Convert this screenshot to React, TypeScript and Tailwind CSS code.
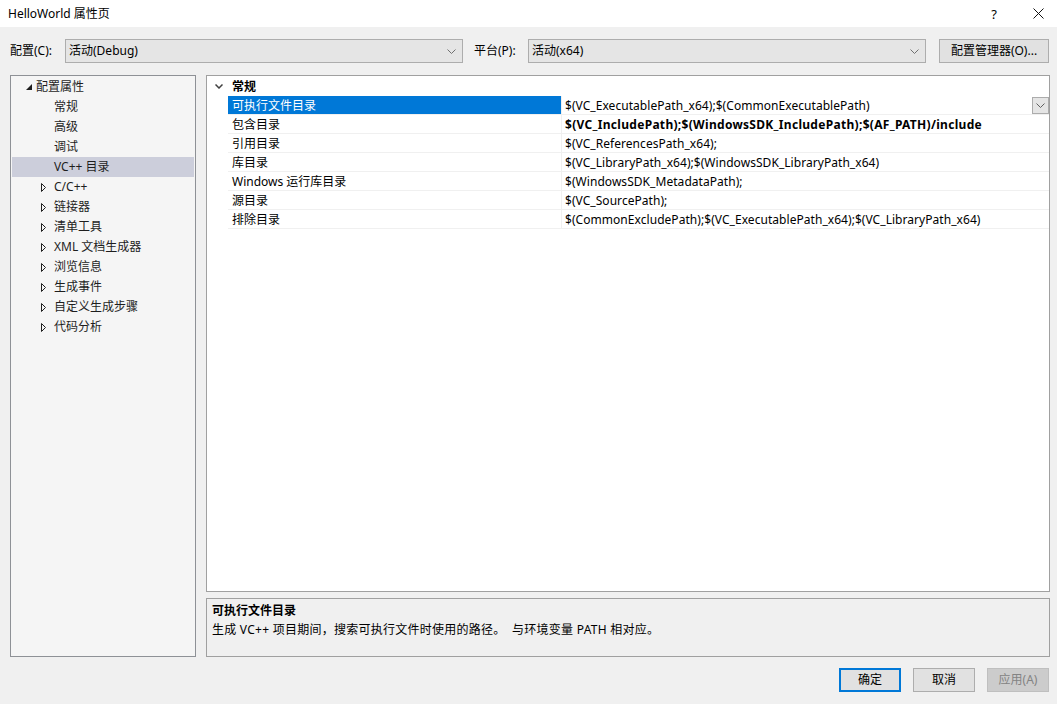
import React from "react"

const font = { fontFamily: '"Noto Sans", "Noto Sans CJK SC", sans-serif' }

const tree = [
  { label: "常规", kind: "leaf" },
  { label: "高级", kind: "leaf" },
  { label: "调试", kind: "leaf" },
  { label: "VC++ 目录", kind: "leaf", selected: true },
  { label: "C/C++", kind: "node" },
  { label: "链接器", kind: "node" },
  { label: "清单工具", kind: "node" },
  { label: "XML 文档生成器", kind: "node" },
  { label: "浏览信息", kind: "node" },
  { label: "生成事件", kind: "node" },
  { label: "自定义生成步骤", kind: "node" },
  { label: "代码分析", kind: "node" },
]

const props = [
  { name: "可执行文件目录", value: "$(VC_ExecutablePath_x64);$(CommonExecutablePath)", selected: true },
  { name: "包含目录", value: "$(VC_IncludePath);$(WindowsSDK_IncludePath);$(AF_PATH)/include", bold: true },
  { name: "引用目录", value: "$(VC_ReferencesPath_x64);" },
  { name: "库目录", value: "$(VC_LibraryPath_x64);$(WindowsSDK_LibraryPath_x64)" },
  { name: "Windows 运行库目录", value: "$(WindowsSDK_MetadataPath);" },
  { name: "源目录", value: "$(VC_SourcePath);" },
  { name: "排除目录", value: "$(CommonExcludePath);$(VC_ExecutablePath_x64);$(VC_LibraryPath_x64)" },
]

function Chevron({ color = "#606060" }: { color?: string }) {
  return (
    <svg width="9" height="5" viewBox="0 0 9 5">
      <polyline points="0.5,0.5 4.5,4.5 8.5,0.5" fill="none" stroke={color} strokeWidth="1" />
    </svg>
  )
}

function Combo({ text }: { text: string }) {
  return (
    <div className="w-[398px] h-[24px] bg-[#e5e5e5] border border-[#adadad] flex items-center pl-[3px] pr-[6px]">
      <span className="flex-1">{text}</span>
      <Chevron color="#707070" />
    </div>
  )
}

export default function App() {
  return (
    <div style={font} className="w-[1057px] h-[704px] bg-[#f0f0f0] text-[12px] leading-[16px] text-black flex flex-col overflow-hidden">
      {/* title bar */}
      <div className="h-[27px] bg-white flex items-center pl-[8px] pr-[13px]">
        <span className="flex-1">HelloWorld 属性页</span>
        <span className="text-[13px] mr-[36px]">?</span>
        <svg width="11" height="11" viewBox="0 0 11 11">
          <path d="M0.5 0.5 L10.5 10.5 M10.5 0.5 L0.5 10.5" stroke="#111" strokeWidth="1" />
        </svg>
      </div>

      {/* config row */}
      <div className="flex items-center pl-[10px] pr-[8px] mt-[12px] h-[24px]">
        <span className="w-[55px]">配置(C):</span>
        <Combo text="活动(Debug)" />
        <span className="w-[54px] ml-[11px]">平台(P):</span>
        <Combo text="活动(x64)" />
        <div className="w-[110px] h-[24px] ml-[13px] bg-[#e1e1e1] border border-[#adadad] flex items-center justify-center">
          配置管理器(O)...
        </div>
      </div>

      {/* main */}
      <div className="flex mt-[12px] pl-[10px] pr-[7px] h-[582px] gap-[10px]">
        {/* tree */}
        <div className="w-[186px] shrink-0 bg-[#f5f5f5] border border-[#8e9196] p-[1px] text-[#1e1e1e]">
          <div className="h-[20px] flex items-center">
            <div className="w-[23px] flex justify-end pr-[3px]">
              <svg width="6" height="6" viewBox="0 0 6 6">
                <polygon points="6,0 6,6 0,6" fill="#1e1e1e" />
              </svg>
            </div>
            <span className="ml-[1px]">配置属性</span>
          </div>
          {tree.map((t) => (
            <div key={t.label} className={`h-[20px] flex items-center ${t.selected ? "bg-[#cccedb]" : ""}`}>
              <div className="w-[42px] flex justify-end pr-[8px]">
                {t.kind === "node" && (
                  <svg width="5" height="9" viewBox="0 0 5 9">
                    <polygon points="0.5,0.5 4.5,4.5 0.5,8.5" fill="none" stroke="#1e1e1e" strokeWidth="1" />
                  </svg>
                )}
              </div>
              <span>{t.label}</span>
            </div>
          ))}
        </div>

        {/* right */}
        <div className="flex-1 flex flex-col gap-[6px]">
          <div className="flex-1 bg-white border border-[#a0a0a0]">
            <div className="h-[20px] flex items-center pt-[1px]">
              <div className="w-[21px] flex justify-center pl-[2px]">
                <svg width="8" height="5" viewBox="0 0 8 5">
                  <polyline points="0.5,0.5 4,4 7.5,0.5" fill="none" stroke="#404040" strokeWidth="1.5" />
                </svg>
              </div>
              <span className="font-bold pl-[4px]">常规</span>
            </div>
            {props.map((p) => (
              <div key={p.name} className="flex h-[19px]">
                <div className="w-[21px] shrink-0" />
                <div className="flex flex-1 border-b border-[#f0f0f0]">
                  <div className={`w-[333px] shrink-0 pl-[4px] pt-[1px] flex items-center ${p.selected ? "bg-[#0078d7] text-white" : ""}`}>
                    {p.name}
                  </div>
                  <div className="flex-1 border-l border-[#f0f0f0] pl-[3px] flex items-center">
                    <span className={`flex-1 pt-[1px] ${p.bold ? "font-bold tracking-[0.3px]" : "tracking-[0.05px]"}`}>{p.value}</span>
                    {p.selected && (
                      <div className="w-[17px] h-[17px] bg-[#e5e5e5] border border-[#acacac] flex items-center justify-center">
                        <Chevron color="#606060" />
                      </div>
                    )}
                  </div>
                </div>
              </div>
            ))}
          </div>
          <div className="h-[59px] bg-[#f0f0f0] border border-[#a0a0a0] pl-[5px] pt-[2px] leading-[19px]">
            <div className="font-bold">可执行文件目录</div>
            <div className="whitespace-pre tracking-[0.25px]">生成 VC++ 项目期间，搜索可执行文件时使用的路径。  与环境变量 PATH 相对应。</div>
          </div>
        </div>
      </div>

      {/* buttons */}
      <div className="flex justify-end gap-[12px] pr-[8px] mt-[11px]">
        <div className="w-[62px] h-[24px] bg-[#e1e1e1] border-2 border-[#0078d7] flex items-center justify-center">确定</div>
        <div className="w-[62px] h-[24px] bg-[#e1e1e1] border border-[#adadad] flex items-center justify-center">取消</div>
        <div className="w-[62px] h-[24px] bg-[#cccccc] border border-[#bfbfbf] text-[#838383] flex items-center justify-center">应用(A)</div>
      </div>
    </div>
  )
}
